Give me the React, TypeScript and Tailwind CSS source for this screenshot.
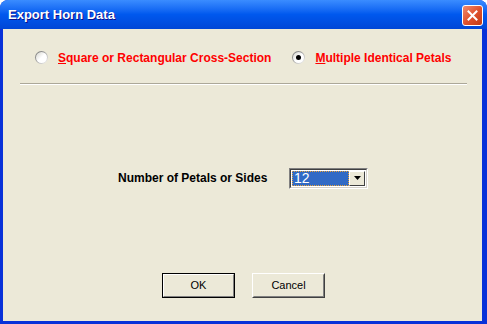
import React, { useState } from 'react';

const font = { fontFamily: '"Liberation Sans", Arial, sans-serif' };

const Radio = ({ checked, onClick }: { checked: boolean; onClick: () => void }) => (
  <button
    onClick={onClick}
    className="relative w-[13px] h-[13px] rounded-full bg-gradient-to-br from-[#6f7070] via-[#a8a8a8] to-white p-[1px] shrink-0"
  >
    <span className="flex w-full h-full rounded-full bg-gradient-to-br from-[#d4d4cc] via-white to-white items-center justify-center">
      {checked && <span className="w-[5px] h-[5px] rounded-full bg-black" />}
    </span>
  </button>
);

export default function App() {
  const [shape, setShape] = useState<'square' | 'petals'>('petals');

  return (
    <div style={font} className="w-[487px] h-[324px] flex flex-col bg-[#0831d9] rounded-t-[8px] overflow-hidden select-none">
      <div className="h-[29px] flex items-center justify-between pl-[8px] pr-[4px] bg-gradient-to-b from-[#3a8cff] via-[#0058ee] to-[#0046d6] shrink-0">
        <span className="text-white font-bold text-[13px] [text-shadow:1px_1px_0_#0f1089]">Export Horn Data</span>
        <button className="w-[21px] h-[21px] rounded-[3px] border border-white bg-gradient-to-br from-[#f08a6d] via-[#e0522e] to-[#c13a12] flex items-center justify-center mt-[1px]">
          <svg width="11" height="11" viewBox="0 0 11 11">
            <path d="M1.5 1.5 L9.5 9.5 M9.5 1.5 L1.5 9.5" stroke="white" strokeWidth="2" strokeLinecap="square" />
          </svg>
        </button>
      </div>

      <div className="flex-1 ml-[3px] mr-[5px] mb-[3px] bg-[#ece9d8] flex flex-col text-[11px]">
        <div className="flex items-center mt-[22px] h-[13px] pl-[32px] text-[12px]">
          <Radio checked={shape === 'square'} onClick={() => setShape('square')} />
          <span className="ml-[10px] text-[#ff0000] font-bold"><span className="underline">S</span>quare or Rectangular Cross-Section</span>
          <span className="w-[21px]" />
          <Radio checked={shape === 'petals'} onClick={() => setShape('petals')} />
          <span className="ml-[10px] text-[#ff0000] font-bold"><span className="underline">M</span>ultiple Identical Petals</span>
        </div>

        <div className="mt-[19px] ml-[17px] w-[447px] border-t border-t-[#aca899] border-b border-b-white" />

        <div className="flex items-center mt-[82px] pl-[115px] h-[22px]">
          <span className="font-bold text-black w-[171px] text-[12px]">Number of Petals or Sides</span>
          <div className="w-[79px] h-[21px] border border-t-[#808080] border-l-[#808080] border-b-white border-r-white">
            <div className="w-full h-full border border-t-[#404040] border-l-[#404040] border-b-[#d4d0c8] border-r-[#d4d0c8] bg-white flex p-[1px]">
              <div className="flex-1 bg-[#316ac5] border border-dotted border-[#e8a33a] text-white flex items-center pl-[1px] text-[14px] leading-none">12</div>
              <div className="w-[16px] bg-[#ece9d8] border border-t-white border-l-white border-b-[#404040] border-r-[#404040] flex items-center justify-center">
                <svg width="7" height="4" viewBox="0 0 7 4"><path d="M0 0 H7 L3.5 4 Z" fill="black" /></svg>
              </div>
            </div>
          </div>
        </div>

        <div className="flex mt-[84px] pl-[159px] gap-[17px]">
          <button className="w-[73px] h-[25px] border border-black bg-[#ece9d8] flex">
            <span className="flex-1 flex items-center justify-center border border-t-white border-l-white border-b-[#808080] border-r-[#808080] text-black">OK</span>
          </button>
          <button className="w-[73px] h-[25px] border border-t-white border-l-white border-b-[#404040] border-r-[#404040] bg-[#ece9d8] flex">
            <span className="flex-1 flex items-center justify-center border border-t-[#ece9d8] border-l-[#ece9d8] border-b-[#808080] border-r-[#808080] text-black">Cancel</span>
          </button>
        </div>
      </div>
    </div>
  );
}
